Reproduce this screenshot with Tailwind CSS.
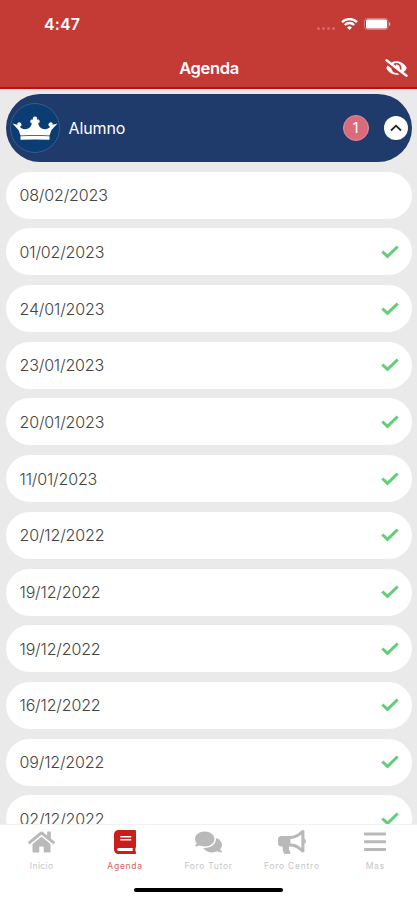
<!DOCTYPE html>
<html lang="es">
<head>
<meta charset="utf-8">
<meta name="viewport" content="width=device-width, initial-scale=1">
<title>Agenda</title>
<script src="https://cdn.jsdelivr.net/npm/@tailwindcss/browser@4"></script>
</head>
<body class="flex h-[900px] w-[417px] flex-col overflow-hidden bg-[#eaeaea] font-['Inter','Liberation_Sans',sans-serif]">
<header class="h-[89px] shrink-0 border-b-2 border-[#bd100c] bg-[#c43a34] text-white">
  <div class="flex h-12 items-center justify-between pl-[44px] pr-[26px]">
    <span class="text-[16px] leading-5 font-semibold tracking-[0.1px]">4:47</span>
    <div class="flex items-center">
      <div class="mr-[6px] mt-[9px] flex gap-[2px]"><i class="size-[3px] rounded-full bg-white/25"></i><i class="size-[3px] rounded-full bg-white/25"></i><i class="size-[3px] rounded-full bg-white/25"></i><i class="size-[3px] rounded-full bg-white/25"></i></div>
      <svg class="mr-[6px] h-[12px] w-[17px]" viewBox="0 0 17 12" fill="none" stroke="white" stroke-width="2.4"><path d="M1 4.200a10.600 10.600 0 0 1 15 0M3.800 7a6.700 6.700 0 0 1 9.400 0"/><path d="M8.500 12L6 9.400a3.600 3.600 0 0 1 5 0z" fill="white" stroke="none"/></svg>
      <svg class="h-[12px] w-[27px]" viewBox="0 0 27 12"><rect x=".5" y=".5" width="23.5" height="11" rx="3" fill="none" stroke="white" stroke-opacity=".35"/><rect x="2" y="1.500" width="21" height="9" rx="1.500" fill="white"/><path d="M25 4c2 .6 2 3.400 0 4z" fill="white" fill-opacity=".5"/></svg>
    </div>
  </div>
  <div class="grid h-[39px] grid-cols-[1fr_auto_1fr] items-center pr-[9px] pl-[10px]">
    <span></span>
    <h1 class="text-[16.5px] leading-5 font-semibold tracking-[-0.35px]">Agenda</h1>
    <svg class="h-[18px] w-[23px] justify-self-end" viewBox="0 0 640 512" fill="white"><path d="M320 400c-75.850 0-137.250-58.710-142.900-133.110L72.200 185.820c-13.790 17.300-26.480 35.590-36.720 55.590a32.350 32.350 0 0 0 0 29.190C89.710 376.410 197.070 448 320 448c26.910 0 52.870-4 77.890-10.460L346 397.390a144.130 144.130 0 0 1-26 2.610zm313.820 58.100l-110.550-85.440a331.250 331.250 0 0 0 81.250-102.070 32.350 32.350 0 0 0 0-29.190C550.290 135.590 442.930 64 320 64a308.150 308.150 0 0 0-147.320 37.700L45.460 3.370A16 16 0 0 0 23 6.180L3.370 31.450A16 16 0 0 0 6.180 53.900l588.360 454.730a16 16 0 0 0 22.460-2.810l19.640-25.270a16 16 0 0 0-2.820-22.450zm-183.720-142l-39.300-30.380A94.750 94.750 0 0 0 416 256a94.760 94.760 0 0 0-121.310-92.210A47.650 47.650 0 0 1 304 192a46.640 46.640 0 0 1-1.540 10l-73.610-56.890A142.310 142.310 0 0 1 320 112a143.920 143.920 0 0 1 144 144c0 21.630-5.290 41.790-13.900 60.110z"/></svg>
  </div>
</header>
<main class="flex min-h-0 flex-1 flex-col gap-[9.700px] overflow-hidden px-[5.500px] pt-[5px]">
  <section class="flex h-[68px] shrink-0 items-center rounded-full bg-[#1f3b6b] pr-[4px] pl-[4px] text-white">
    <svg class="size-[50px] shrink-0" viewBox="0 0 50 50"><circle cx="25" cy="25" r="24.500" fill="#0b3c73" stroke="#41648f" stroke-width=".8"/><g fill="white"><path d="M10.500 32.500L8.500 27 2.500 20.600 7.500 21.700C6.500 19.800 9.300 18.200 10.800 20c1.600 1.800.3 3.500-1 3.800 2.200 3.200 8.700 3.200 10.900-.6l1.200-2.600c-3-1.400-1.400-5 1.200-3.800-.9-1.600.2-3.200 1.900-3.200s2.800 1.600 1.900 3.200c2.600-1.200 4.200 2.400 1.200 3.800l1.200 2.600c2.200 3.800 8.700 3.800 10.900.6-1.300-.3-2.600-2-1-3.800 1.500-1.800 4.300-.2 3.300 1.700L47.500 20.600 41.500 27 39.500 32.500Q25 31.500 10.500 32.500z"/><path d="M10.500 33.300Q25 32.300 39.500 33.300V36.800Q25 36 10.500 36.800z"/></g></svg>
    <span class="ml-[9px] flex-1 text-[16px] leading-5 tracking-[-0.1px]">Alumno</span>
    <span class="mr-[15px] flex size-[26px] items-center justify-center rounded-full border border-[#df8f9c] bg-[#d96b7b] text-[14px] leading-none">1</span>
    <button class="flex size-[24px] items-center justify-center rounded-full bg-white" aria-label="Contraer"><svg class="h-[8px] w-[12px]" viewBox="0 0 12 8" fill="none" stroke="#222" stroke-width="1.800"><path d="M1 6.500L6 1.700l5 4.800"/></svg></button>
  </section>
  <ul id="dates" class="flex shrink-0 flex-col gap-[9.700px]"></ul>
</main>
<nav class="grid h-[76px] shrink-0 grid-cols-5 grid-rows-[51px_25px] border-t border-[#f2f2f2] bg-white text-[#b9b9b9]">
  <a class="flex flex-col items-center pt-[5px]"><svg class="h-[24px] w-[27px]" viewBox="0 0 576 512" fill="currentColor"><path d="M280.370 148.260L96 300.110V464a16 16 0 0 0 16 16l112.060-.290a16 16 0 0 0 15.920-16V368a16 16 0 0 1 16-16h64a16 16 0 0 1 16 16v95.640a16 16 0 0 0 16 16.050L464 480a16 16 0 0 0 16-16V300L295.670 148.260a12.190 12.190 0 0 0-15.300 0zM571.600 251.470L488 182.560V44.050a12 12 0 0 0-12-12h-56a12 12 0 0 0-12 12v72.610L318.470 43a48 48 0 0 0-61 0L4.340 251.470a12 12 0 0 0-1.600 16.900l25.500 31A12 12 0 0 0 45.150 301l235.220-193.740a12.190 12.190 0 0 1 15.300 0L530.900 301a12 12 0 0 0 16.900-1.600l25.500-31a12 12 0 0 0-1.700-16.930z"/></svg><span class="mt-[6px] text-[8.500px] leading-[12px] tracking-[0.4px] text-[#c6c6c6]">Inicio</span></a>
  <a class="flex flex-col items-center pt-[5px] text-[#c81e1c]"><svg class="h-[24px] w-[22px]" viewBox="0 0 448 512" preserveAspectRatio="none" fill="currentColor"><path d="M448 360V24c0-13.300-10.700-24-24-24H96C43 0 0 43 0 96v320c0 53 43 96 96 96h328c13.300 0 24-10.700 24-24v-16c0-7.500-3.500-14.300-8.900-18.700-4.200-15.400-4.200-59.300 0-74.700 5.400-4.300 8.900-11.100 8.900-18.600zM128 134c0-3.300 2.700-6 6-6h212c3.300 0 6 2.700 6 6v20c0 3.300-2.700 6-6 6H134c-3.300 0-6-2.700-6-6v-20zm0 64c0-3.300 2.700-6 6-6h212c3.300 0 6 2.700 6 6v20c0 3.300-2.700 6-6 6H134c-3.300 0-6-2.700-6-6v-20zm253.400 250H96c-17.700 0-32-14.300-32-32 0-17.600 14.400-32 32-32h285.400c-1.900 17.100-1.900 46.900 0 64z"/></svg><span class="mt-[6px] text-[8.500px] leading-[12px] tracking-[0.75px] text-[#d96360]">Agenda</span></a>
  <a class="flex flex-col items-center pt-[5px]"><svg class="h-[24px] w-[27px]" viewBox="0 0 576 512" fill="currentColor"><path d="M416 192c0-88.400-93.100-160-208-160S0 103.600 0 192c0 34.300 14.100 65.900 38 92-13.400 30.200-35.500 54.200-35.800 54.500-2.200 2.300-2.800 5.700-1.500 8.700S4.800 352 8 352c36.600 0 66.900-12.300 88.700-25 32.200 15.700 70.300 25 111.300 25 114.900 0 208-71.600 208-160zm122 220c23.900-26 38-57.700 38-92 0-66.900-53.500-124.200-129.300-148.100.9 6.600 1.300 13.300 1.300 20.100 0 105.900-107.700 192-240 192-10.800 0-21.300-.8-31.700-1.900C207.800 439.600 281.800 480 368 480c41 0 79.100-9.200 111.300-25 21.800 12.700 52.100 25 88.700 25 3.200 0 6.100-1.900 7.300-4.800 1.300-2.900.7-6.300-1.500-8.700-.3-.2-22.400-24.200-35.800-54.500z"/></svg><span class="mt-[6px] text-[8.500px] leading-[12px] tracking-[0.7px] text-[#c6c6c6]">Foro Tutor</span></a>
  <a class="flex flex-col items-center pt-[5px]"><svg class="h-[24px] w-[28px]" viewBox="0 0 576 512" preserveAspectRatio="none" fill="currentColor"><path d="M576 240c0-23.630-12.950-44.040-32-55.120V32.010C544 23.260 537.020 0 512 0c-7.120 0-14.190 2.380-19.980 7.020l-85.030 68.030C364.280 109.190 310.660 128 256 128H64c-35.350 0-64 28.650-64 64v96c0 35.350 28.650 64 64 64h33.700c-1.390 10.480-2.180 21.140-2.180 32 0 39.770 9.260 77.350 25.560 110.940 5.190 10.690 16.520 17.060 28.400 17.060h74.280c26.050 0 41.690-29.840 25.900-50.560-16.400-21.520-26.150-48.360-26.150-77.440 0-11.110 1.620-21.790 4.410-32H256c54.660 0 108.280 18.810 150.980 52.950l85.030 68.030a32.023 32.023 0 0 0 19.980 7.020c24.920 0 32-22.780 32-32V295.130C563.050 284.040 576 263.630 576 240zm-96 141.420l-33.050-26.440C392.950 311.780 325.120 288 256 288v-96c69.120 0 136.950-23.780 190.950-66.980L480 98.580v282.840z"/></svg><span class="mt-[6px] text-[8.500px] leading-[12px] tracking-[0.75px] text-[#c6c6c6]">Foro Centro</span></a>
  <a class="flex flex-col items-center pt-[5px]"><svg class="h-[24px] w-[22px]" viewBox="0 0 22 24" fill="currentColor"><rect y="2.500" width="22" height="3" rx=".7"/><rect y="10.300" width="22" height="3" rx=".7"/><rect y="18" width="22" height="3" rx=".7"/></svg><span class="mt-[6px] text-[8.500px] leading-[12px] tracking-[0.8px] text-[#c6c6c6]">Mas</span></a>
  <div class="col-span-5 mt-[12px] h-[4px] w-[149px] justify-self-center rounded-full bg-black"></div>
</nav>
<script>
const entries = ["08/02/2023","01/02/2023","24/01/2023","23/01/2023","20/01/2023","11/01/2023","20/12/2022","19/12/2022","19/12/2022","16/12/2022","09/12/2022","02/12/2022"];
const check = '<svg class="h-[14px] w-[18px]" viewBox="0 0 18 14" fill="none" stroke="#62cf78" stroke-width="3"><path d="M1.300 6.500L6.500 11.400L16.700 1.500"/></svg>';
document.getElementById("dates").innerHTML = entries.map((d, i) =>
  `<li class="flex h-[47px] shrink-0 items-center justify-between rounded-full bg-white pr-[13px] pl-[14px]"><span class="text-[16px] leading-5 font-light tracking-[-0.15px] text-[#444]">${d}</span>${i ? check : ""}</li>`).join("");
</script>
</body>
</html>
